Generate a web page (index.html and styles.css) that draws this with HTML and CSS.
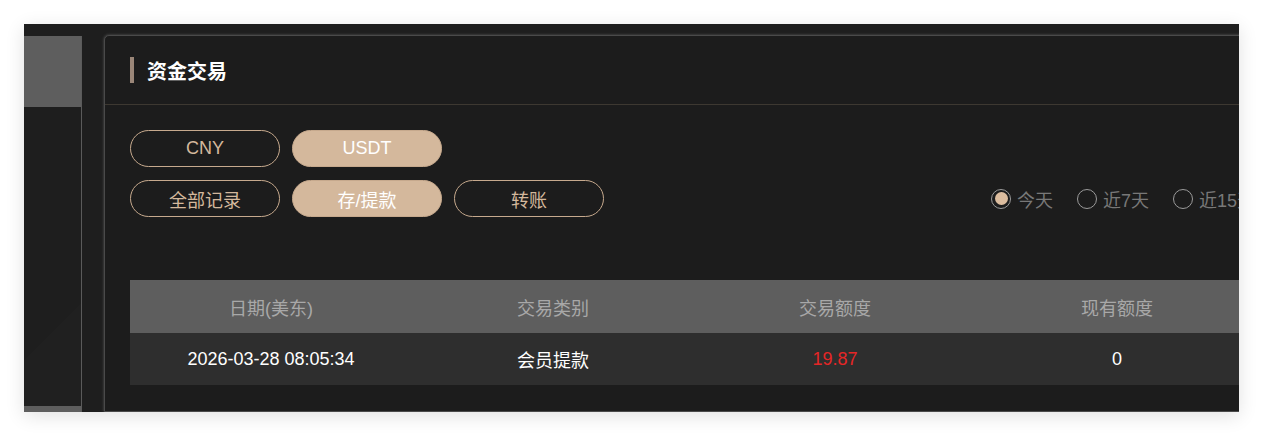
FILE: index.html
```html
<!DOCTYPE html>
<html>
<head>
	<meta charset="utf-8">
	<title>资金交易</title>
	<link rel="stylesheet" href="styles.css">
</head>
<body>
	<div class="frame">
		<div class="sidebar">
			<div class="navTop"></div>
			<div class="navFill"></div>
			<div class="navBottom"></div>
		</div>
		<div class="panel">
			<div class="panelHead">
				<span class="bar"></span>
				<h2 class="panelTitle">资金交易</h2>
			</div>
			<div class="panelBody">
				<div class="btnRow">
					<button class="pill">CNY</button>
					<button class="pill active">USDT</button>
				</div>
				<div class="btnRow">
					<button class="pill">全部记录</button>
					<button class="pill active">存/提款</button>
					<button class="pill">转账</button>
					<div class="radios">
						<label class="radio"><span class="dot checked"></span>今天</label>
						<label class="radio"><span class="dot"></span>近7天</label>
						<label class="radio"><span class="dot"></span>近15天</label>
						<label class="radio"><span class="dot"></span>近30天</label>
					</div>
				</div>
				<table class="records">
					<thead>
						<tr>
							<th>日期(美东)</th>
							<th>交易类别</th>
							<th>交易额度</th>
							<th>现有额度</th>
						</tr>
					</thead>
					<tbody>
						<tr>
							<td>2026-03-28 08:05:34</td>
							<td>会员提款</td>
							<td class="minus">19.87</td>
							<td>0</td>
						</tr>
					</tbody>
				</table>
			</div>
		</div>
	</div>
</body>
</html>
```

FILE: styles.css
```css
body {
	margin: 0;
	padding: 0;
	background: #ffffff;
	font-family: "Liberation Sans", "Noto Sans CJK SC", sans-serif;
}

.frame {
	margin: 24px;
	width: 1215px;
	height: 388px;
	overflow: hidden;
	background: #1e1e1e;
	box-shadow: 0 4px 18px rgba(0, 0, 0, 0.12);
	display: flex;
	padding-top: 11px;
	box-sizing: border-box;
}

.sidebar {
	width: 58px;
	flex-shrink: 0;
	margin-top: 1px;
	display: flex;
	flex-direction: column;
	border-right: 1px solid #5a5a5a;
	box-sizing: border-box;
	background: linear-gradient(135deg, #1e1e1e 75%, #202020 75%);
}
.navTop {
	height: 71px;
	flex-shrink: 0;
	background: #5e5e5e;
}
.navFill {
	height: 299px;
	flex-shrink: 0;
}
.navBottom {
	height: 40px;
	flex-shrink: 0;
	background: #5e5e5e;
}

.panel {
	width: 1180px;
	flex-shrink: 0;
	margin-left: 22px;
	background: #1c1c1c;
	border: 1px solid #4a4a4a;
	border-radius: 5px 0 0 0;
	box-shadow: 0 0 3px #5a5a5a;
}

.panelHead {
	height: 68px;
	display: flex;
	align-items: center;
	padding-left: 25px;
	border-bottom: 1px solid #3d3831;
}
.bar {
	width: 4px;
	height: 26px;
	background: #9a8678;
	margin-right: 13px;
}
.panelTitle {
	margin: 0;
	font-size: 20px;
	font-weight: bold;
	color: #ffffff;
}

.panelBody {
	padding: 25px 25px;
}

.btnRow {
	display: flex;
	align-items: center;
	gap: 12px;
	margin-bottom: 13px;
}
.pill {
	width: 150px;
	height: 37px;
	flex-shrink: 0;
	border: 1px solid #c6a98d;
	border-radius: 19px;
	background: transparent;
	color: #d4b89c;
	font-family: inherit;
	font-size: 18px;
	padding: 0;
}
.pill.active {
	background: #d4b89c;
	color: #ffffff;
}

.radios {
	margin-left: 375px;
	display: flex;
	gap: 24px;
	white-space: nowrap;
	flex-shrink: 0;
}
.radio {
	display: flex;
	align-items: center;
	color: #787878;
	font-size: 18px;
}
.dot {
	width: 20px;
	height: 20px;
	box-sizing: border-box;
	border: 1.5px solid #9a9a9a;
	border-radius: 50%;
	margin-right: 6px;
	display: flex;
	align-items: center;
	justify-content: center;
}
.dot.checked::after {
	content: "";
	width: 13px;
	height: 13px;
	border-radius: 50%;
	background: #dcbd9f;
}

.records {
	margin-top: 63px;
	width: 1128px;
	border-collapse: collapse;
	table-layout: fixed;
}
.records th {
	height: 53px;
	padding: 0;
	background: #5e5e5e;
	color: #a8a8a8;
	font-weight: normal;
	font-size: 18px;
}
.records td {
	height: 52px;
	padding: 0;
	background: #2e2e2e;
	color: #ffffff;
	font-size: 18px;
	text-align: center;
}
.records td.minus {
	color: #e52626;
}
```
